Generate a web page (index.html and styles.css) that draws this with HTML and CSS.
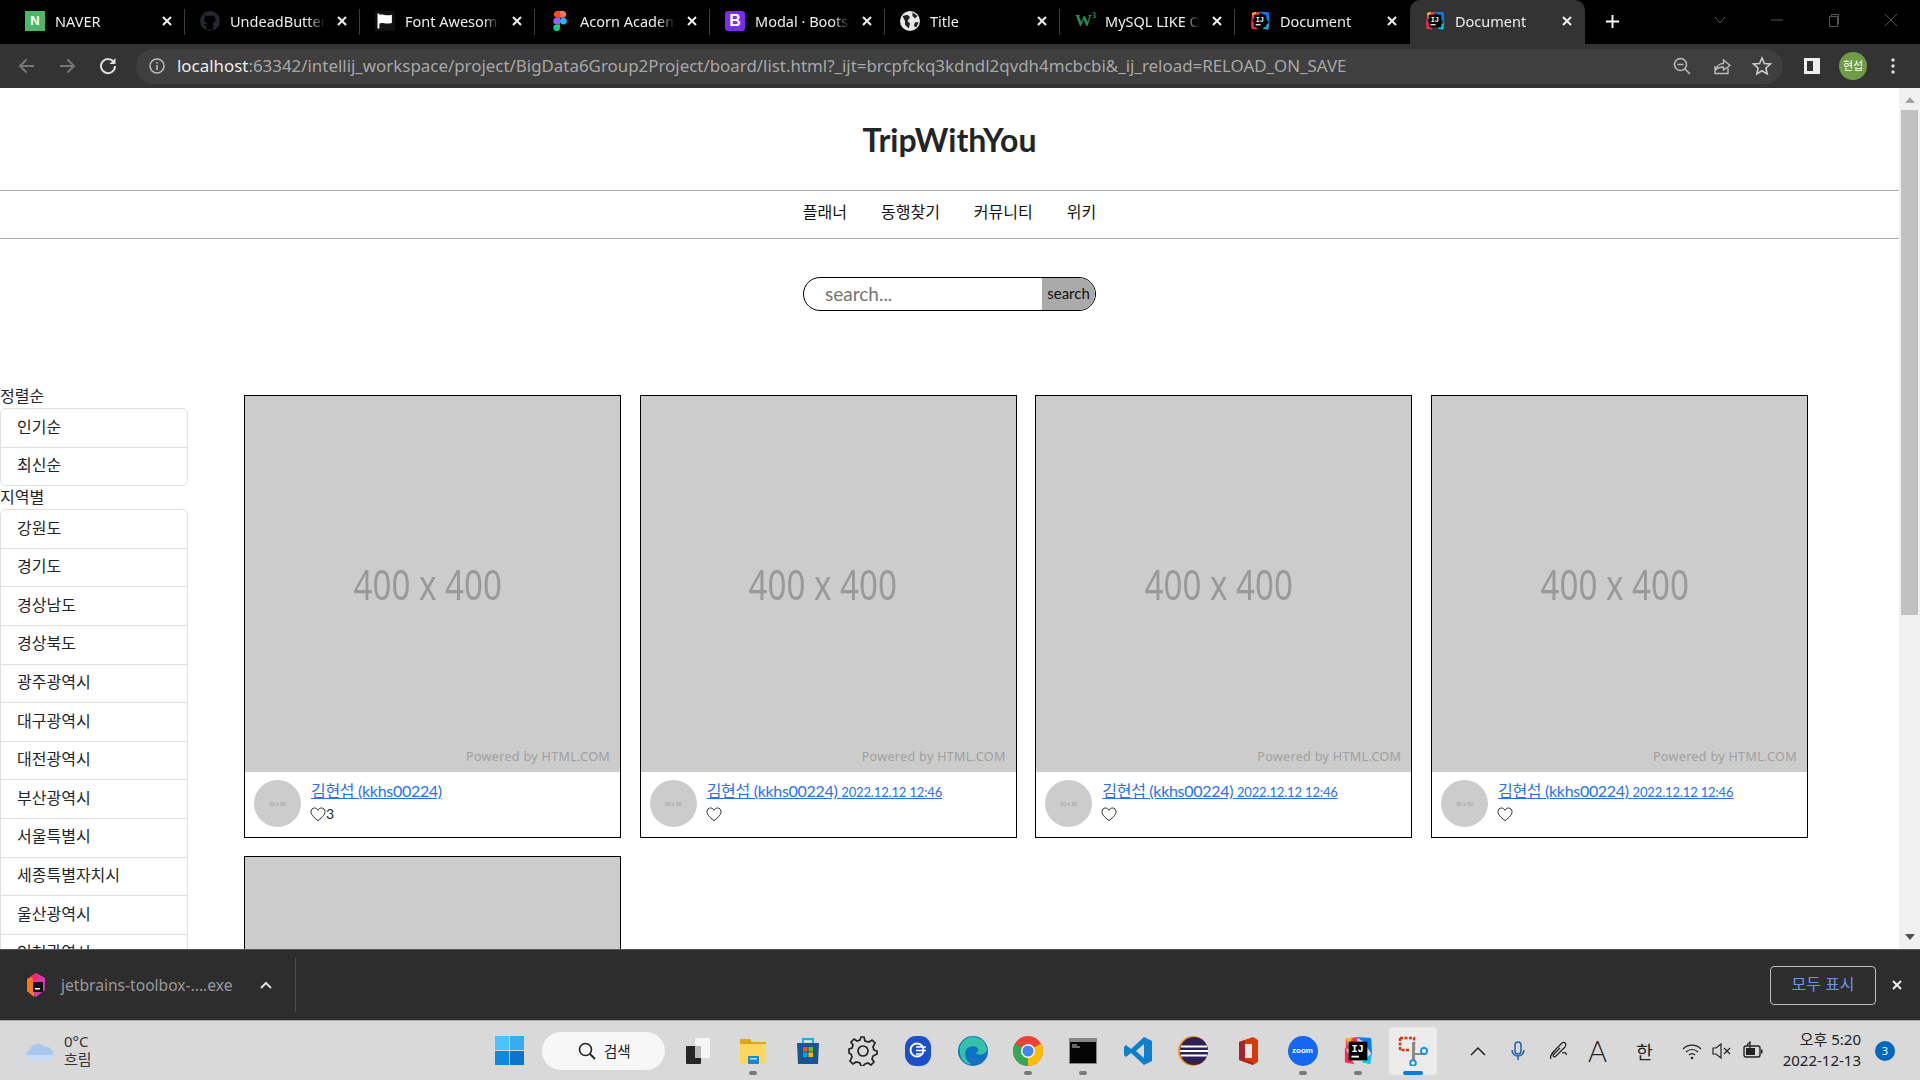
FILE: index.html
```html
<!DOCTYPE html>
<html lang="ko">
<head>
<meta charset="utf-8">
<title>Document</title>
<link rel="stylesheet" href="styles.css">
</head>
<body>
<svg class="sprite" aria-hidden="true">
  <symbol id="ij" viewBox="0 0 32 32">
    <path d="M3 3 16 1 13 12 3 14Z" fill="#fe315d"/>
    <path d="M14 1 30 2 31 20 22 6Z" fill="#087cfa"/>
    <path d="M2 12 12 30 2 28Z" fill="#fe2857"/>
    <path d="M20 28 31 18 29 30Z" fill="#07c3f2"/>
    <path d="M3 3 10 1 6 12Z" fill="#fdb60d"/>
    <rect x="6" y="6" width="20" height="20" fill="#000"/>
    <rect x="9" y="21" width="8" height="2" fill="#fff"/>
    <text x="9" y="17" class="ij-text">IJ</text>
  </symbol>
  <symbol id="x" viewBox="0 0 14 14"><path d="M3 3 11 11M11 3 3 11" fill="none" stroke="currentColor" stroke-width="2"/></symbol>
  <symbol id="heart" viewBox="0 0 16 16"><path d="M8 14.6C3 10.8 1 8.4 1 5.6 1 3.4 2.7 2 4.5 2 6 2 7.3 2.9 8 4.3 8.7 2.9 10 2 11.5 2 13.3 2 15 3.4 15 5.6 15 8.4 13 10.8 8 14.6Z" fill="none" stroke="#212529" stroke-width="1"/></symbol>
</svg>
<div class="screen">
  <div class="tabs">
    <div class="tab"><span class="favicon naver">N</span><span class="tab-title">NAVER</span><svg class="tab-close"><use href="#x"/></svg></div>
    <div class="tab"><svg class="favicon" viewBox="0 0 16 16"><circle cx="8" cy="8" r="8" fill="#24292f"/><path d="M5 15V12C3 12 3 10 2.500 10 4 10 4 11 5.500 11 5.500 10.500 5.600 10 6 9.700 4 9.400 3.500 8 3.500 6.800 3.500 6 3.800 5.400 4.200 5 4 4.400 4.100 3.700 4.300 3.300 5 3.300 5.700 3.800 6 4.100 7.300 3.700 8.700 3.700 10 4.100 10.300 3.800 11 3.300 11.700 3.300 11.900 3.700 12 4.400 11.800 5 12.200 5.400 12.500 6 12.500 6.800 12.500 8 12 9.400 10 9.700 10.400 10 10.500 10.700 10.500 11.500V15Z" fill="#000"/></svg><span class="tab-title">UndeadButterfly</span><svg class="tab-close"><use href="#x"/></svg></div>
    <div class="tab"><svg class="favicon" viewBox="0 0 16 16"><rect width="16" height="16" fill="#111"/><path d="M2 2V14H3.500V10C6 8.500 8 11 13.500 9.500V3C9 4.500 6 2 3.500 3.200V2Z" fill="#fff"/></svg><span class="tab-title">Font Awesome</span><svg class="tab-close"><use href="#x"/></svg></div>
    <div class="tab"><svg class="favicon" viewBox="0 0 16 16"><path d="M8 0H5.300A2.700 2.700 0 0 0 5.300 5.300H8Z" fill="#f24e1e"/><path d="M8 0H10.700A2.700 2.700 0 0 1 10.700 5.300H8Z" fill="#ff7262"/><path d="M8 5.300H5.300A2.700 2.700 0 0 0 5.300 10.700H8Z" fill="#a259ff"/><circle cx="10.700" cy="8" r="2.700" fill="#1abcfe"/><path d="M8 10.700H5.300A2.700 2.700 0 1 0 8 13.400Z" fill="#0acf83"/></svg><span class="tab-title">Acorn Academy</span><svg class="tab-close"><use href="#x"/></svg></div>
    <div class="tab"><span class="favicon bootstrap">B</span><span class="tab-title">Modal · Bootstrap</span><svg class="tab-close"><use href="#x"/></svg></div>
    <div class="tab"><svg class="favicon" viewBox="0 0 16 16"><circle cx="8" cy="8" r="8" fill="#e8e8e8"/><path d="M2 4 6 3 8 5 6 8 8 10 7 14 4 11 4 8ZM10 1 14 4 12 6 10 4ZM12 9 15 9 13 13 11 12Z" fill="#222"/></svg><span class="tab-title">Title</span><svg class="tab-close"><use href="#x"/></svg></div>
    <div class="tab"><span class="favicon w3">W<sup class="w3-sup">3</sup></span><span class="tab-title">MySQL LIKE Operator</span><svg class="tab-close"><use href="#x"/></svg></div>
    <div class="tab tab-plain"><svg class="favicon"><use href="#ij"/></svg><span class="tab-title">Document</span><svg class="tab-close"><use href="#x"/></svg></div>
    <div class="tab tab-active"><svg class="favicon"><use href="#ij"/></svg><span class="tab-title">Document</span><svg class="tab-close"><use href="#x"/></svg></div>
    <svg class="tab-new" viewBox="0 0 16 16"><path d="M8 1V15M1 8H15" stroke="#fff" stroke-width="2"/></svg>
    <div class="window-controls">
      <svg class="win-icon" viewBox="0 0 16 16"><path d="M3 5 8 11 13 5" fill="none" stroke="#555" stroke-width="1"/></svg>
      <svg class="win-icon" viewBox="0 0 16 16"><path d="M2 8H14" stroke="#555" stroke-width="1"/></svg>
      <svg class="win-icon" viewBox="0 0 16 16"><path d="M3.500 4.500H11.500V14.500H3.500ZM5.500 4.500V2.500H12.500V12H11.500" fill="none" stroke="#555" stroke-width="1"/></svg>
      <svg class="win-icon" viewBox="0 0 16 16"><path d="M2 2 14 14M14 2 2 14" stroke="#555" stroke-width="1"/></svg>
    </div>
  </div>

  <div class="toolbar">
    <svg class="tool tool-back" viewBox="0 0 20 20"><path d="M17 10H3.500M9.500 3.500 3 10 9.500 16.500" fill="none" stroke="#777" stroke-width="2"/></svg>
    <svg class="tool tool-fwd" viewBox="0 0 20 20"><path d="M3 10H16.500M10.500 3.500 17 10 10.500 16.500" fill="none" stroke="#777" stroke-width="2"/></svg>
    <svg class="tool tool-reload" viewBox="0 0 20 20"><path d="M16 6.500A7 7 0 1 0 17 10" fill="none" stroke="#ddd" stroke-width="2"/><path d="M17.500 2V8H11.500Z" fill="#ddd"/></svg>
    <div class="omnibox">
      <svg class="info" viewBox="0 0 16 16"><circle cx="8" cy="8" r="7" fill="none" stroke="#bbb" stroke-width="1.500"/><path d="M8 7V12M8 4V5.600" stroke="#bbb" stroke-width="1.600"/></svg>
      <span class="url"><span class="url-host">localhost</span>:63342/intellij_workspace/project/BigData6Group2Project/board/list.html?_ijt=brcpfckq3kdndl2qvdh4mcbcbi&amp;_ij_reload=RELOAD_ON_SAVE</span>
      <div class="omni-actions">
        <svg class="omni-icon" viewBox="0 0 20 20"><circle cx="8.500" cy="8.500" r="6" fill="none" stroke="#bbb" stroke-width="1.600"/><path d="M13 13 18 18M5.500 8.500H11.500" stroke="#bbb" stroke-width="1.600"/></svg>
        <svg class="omni-icon" viewBox="0 0 20 20"><path d="M3 10V17.500H16V12M3.500 14C4.500 10 8 7.500 11.500 7.500V4L18 9.500 11.500 14V11C8 11 5.500 12 3.500 14Z" fill="none" stroke="#bbb" stroke-width="1.400"/></svg>
        <svg class="omni-icon" viewBox="0 0 20 20"><path d="M10 2 12.400 7.500 18.400 8 13.900 12 15.200 17.900 10 14.800 4.800 17.900 6.100 12 1.600 8 7.600 7.500Z" fill="none" stroke="#ccc" stroke-width="1.600"/></svg>
      </div>
    </div>
    <svg class="panel-icon" viewBox="0 0 18 18"><path d="M1 1H17V17H1ZM4 4V14H10V4Z" fill="#eee" fill-rule="evenodd"/></svg>
    <span class="profile">현섭</span>
    <svg class="menu-icon" viewBox="0 0 4 18"><circle cx="2" cy="3" r="1.700" fill="#ddd"/><circle cx="2" cy="9" r="1.700" fill="#ddd"/><circle cx="2" cy="15" r="1.700" fill="#ddd"/></svg>
  </div>

  <div class="viewport">
    <main class="page">
      <header class="site-header"><h1 class="site-title">TripWithYou</h1></header>
      <nav class="site-nav">
        <a class="nav-link">플래너</a><a class="nav-link">동행찾기</a><a class="nav-link">커뮤니티</a><a class="nav-link">위키</a>
      </nav>
      <form class="search">
        <span class="search-input">search...</span>
        <span class="search-btn">search</span>
      </form>
      <div class="content">
        <aside class="sidebar">
          <div class="side-label">정렬순</div>
          <ul class="side-list">
            <li class="side-item">인기순</li>
            <li class="side-item">최신순</li>
          </ul>
          <div class="side-label">지역별</div>
          <ul class="side-list">
            <li class="side-item">강원도</li>
            <li class="side-item">경기도</li>
            <li class="side-item">경상남도</li>
            <li class="side-item">경상북도</li>
            <li class="side-item">광주광역시</li>
            <li class="side-item">대구광역시</li>
            <li class="side-item">대전광역시</li>
            <li class="side-item">부산광역시</li>
            <li class="side-item">서울특별시</li>
            <li class="side-item">세종특별자치시</li>
            <li class="side-item">울산광역시</li>
            <li class="side-item">인천광역시</li>
            <li class="side-item">전라남도</li>
          </ul>
        </aside>
        <section class="cards">
          <article class="card">
            <div class="thumb"><span class="thumb-size">400 x 400</span><span class="thumb-credit">Powered by HTML.COM</span></div>
            <div class="card-foot">
              <div class="avatar"><span class="avatar-size">50 x 50</span></div>
              <div class="card-meta">
                <a class="card-link">김현섭 (kkhs00224)</a>
                <div class="likes"><svg class="heart"><use href="#heart"/></svg>3</div>
              </div>
            </div>
          </article>
          <article class="card">
            <div class="thumb"><span class="thumb-size">400 x 400</span><span class="thumb-credit">Powered by HTML.COM</span></div>
            <div class="card-foot">
              <div class="avatar"><span class="avatar-size">50 x 50</span></div>
              <div class="card-meta">
                <a class="card-link">김현섭 (kkhs00224) <small class="card-date">2022.12.12 12:46</small></a>
                <div class="likes"><svg class="heart"><use href="#heart"/></svg></div>
              </div>
            </div>
          </article>
          <article class="card">
            <div class="thumb"><span class="thumb-size">400 x 400</span><span class="thumb-credit">Powered by HTML.COM</span></div>
            <div class="card-foot">
              <div class="avatar"><span class="avatar-size">50 x 50</span></div>
              <div class="card-meta">
                <a class="card-link">김현섭 (kkhs00224) <small class="card-date">2022.12.12 12:46</small></a>
                <div class="likes"><svg class="heart"><use href="#heart"/></svg></div>
              </div>
            </div>
          </article>
          <article class="card">
            <div class="thumb"><span class="thumb-size">400 x 400</span><span class="thumb-credit">Powered by HTML.COM</span></div>
            <div class="card-foot">
              <div class="avatar"><span class="avatar-size">50 x 50</span></div>
              <div class="card-meta">
                <a class="card-link">김현섭 (kkhs00224) <small class="card-date">2022.12.12 12:46</small></a>
                <div class="likes"><svg class="heart"><use href="#heart"/></svg></div>
              </div>
            </div>
          </article>
          <article class="card">
            <div class="thumb"><span class="thumb-size">400 x 400</span><span class="thumb-credit">Powered by HTML.COM</span></div>
          </article>
        </section>
      </div>
    </main>
    <div class="scrollbar">
      <svg class="sb-arrow" viewBox="0 0 10 6"><path d="M0 6 5 0 10 6Z" fill="#a3a3a3"/></svg>
      <div class="sb-thumb"></div>
      <svg class="sb-arrow sb-arrow-down" viewBox="0 0 10 6"><path d="M0 0 5 6 10 0Z" fill="#505050"/></svg>
    </div>
  </div>

  <div class="downloads">
    <svg class="dl-icon" viewBox="0 0 20 24"><path d="M10 0 19 5V17L10 24 1 18V6Z" fill="#d23bb0"/><path d="M1 6 8 3 8 24 1 18Z" fill="#f97a12"/><path d="M5 3 10 0 12 4 8 9Z" fill="#fe2857"/><rect x="7" y="9" width="10" height="10" fill="#111"/><rect x="9" y="15" width="5" height="1.500" fill="#fff"/></svg>
    <span class="dl-name">jetbrains-toolbox-....exe</span>
    <svg class="dl-caret" viewBox="0 0 12 8"><path d="M1 7 6 2 11 7" fill="none" stroke="#ddd" stroke-width="2"/></svg>
    <span class="dl-sep"></span>
    <span class="dl-all">모두 표시</span>
    <svg class="dl-close"><use href="#x"/></svg>
  </div>

  <footer class="taskbar">
    <div class="weather">
      <svg class="weather-icon" viewBox="0 0 30 22"><path d="M7 21A6 6 0 0 1 6 9.500 8 8 0 0 1 20 7 6.500 6.500 0 0 1 24 21Z" fill="#a9c8f0"/><path d="M2 15A6 6 0 0 0 7 21H24A6 6 0 0 0 29 15Z" fill="#c9dcf6"/></svg>
      <div class="weather-text"><span>0°C</span><span>흐림</span></div>
    </div>
    <div class="task-apps">
      <div class="task-app task-win"><svg class="ti ti-win" viewBox="0 0 30 30"><rect width="14.500" height="14.500" fill="#4cc2ff"/><rect x="15.500" width="14.500" height="14.500" fill="#35adf0"/><rect y="15.500" width="14.500" height="14.500" fill="#0f88e0"/><rect x="15.500" y="15.500" width="14.500" height="14.500" fill="#0a74cf"/></svg></div>
      <div class="task-search"><svg class="search-glass" viewBox="0 0 18 18"><circle cx="7.500" cy="7.500" r="6" fill="none" stroke="#222" stroke-width="1.600"/><path d="M12 12 17 17" stroke="#222" stroke-width="1.800"/></svg><span>검색</span></div>
      <div class="task-app"><svg class="ti" viewBox="0 0 30 30"><rect x="12" y="2" width="15" height="20" rx="1" fill="#f5f5f5"/><rect x="3" y="10" width="15" height="18" rx="1" fill="#262626"/><rect x="12" y="10" width="6" height="12" fill="#b9b9b9"/></svg></div>
      <div class="task-app task-open"><svg class="ti" viewBox="0 0 30 30"><path d="M2 3H12L14 6H28V27H2Z" fill="#e0a512"/><rect x="2" y="8" width="26" height="20" fill="#fcd75b"/><rect x="10" y="20" width="11" height="8" rx="1" fill="#1a86d0"/><rect x="12" y="22" width="7" height="1.500" fill="#bfe3fb"/></svg></div>
      <div class="task-app"><svg class="ti" viewBox="0 0 30 30"><path d="M10 7V3H20V7" fill="none" stroke="#29a8e8" stroke-width="2"/><path d="M4 7H26L25 28H5Z" fill="#17568f"/><rect x="10" y="11" width="4.500" height="4.500" fill="#f25022"/><rect x="15.500" y="11" width="4.500" height="4.500" fill="#7fba00"/><rect x="10" y="16.500" width="4.500" height="4.500" fill="#00a4ef"/><rect x="15.500" y="16.500" width="4.500" height="4.500" fill="#ffb900"/></svg></div>
      <div class="task-app"><svg class="ti" viewBox="0 0 30 30"><path d="M13 1 16 1 17 5 21 6 24 4 27 7 25 11 26 14 29 15V18L25 20 24 23 26 26 23 29 20 27 17 28 15 30H13L12 27 8 26 5 28 2 25 4 21 3 18 1 17V13L4 12 5 9 3 6 6 3 9 5 12 4Z" fill="none" stroke="#222" stroke-width="1.700"/><circle cx="15" cy="15" r="5" fill="none" stroke="#222" stroke-width="1.700"/></svg></div>
      <div class="task-app"><svg class="ti" viewBox="0 0 30 30"><rect x="2" width="26" height="30" rx="11" fill="#1c50c8"/><circle cx="14" cy="14" r="6.500" fill="none" stroke="#fff" stroke-width="2"/><path d="M13 11H23M13 14.500H23M13 18H20" stroke="#fff" stroke-width="1.500"/></svg></div>
      <div class="task-app"><svg class="ti" viewBox="0 0 30 30"><circle cx="15" cy="15" r="15" fill="#0c72c6"/><path d="M2 10A14 14 0 0 1 29 13C29 19 20 20 18 17 24 14 18 8 11 11 5 14 6 25 14 28 7 30 0 22 2 10Z" fill="#35c1a8"/><path d="M14 28C22 30 27 25 28 21 24 24 19 24 15 22 11 20 11 15 13 13 8 15 8 26 14 28Z" fill="#1b6fc2"/></svg></div>
      <div class="task-app task-open"><svg class="ti" viewBox="0 0 30 30"><circle cx="15" cy="15" r="15" fill="#ea4335"/><path d="M15 15 28 7.500A15 15 0 0 1 15 30Z" fill="#fbbc05"/><path d="M15 15 15 30A15 15 0 0 1 2 7.500Z" fill="#34a853"/><circle cx="15" cy="15" r="7" fill="#fff"/><circle cx="15" cy="15" r="5.500" fill="#4285f4"/></svg></div>
      <div class="task-app task-open"><svg class="ti" viewBox="0 0 30 30"><rect x="1" y="2" width="28" height="26" fill="#888"/><rect x="2" y="6" width="26" height="21" fill="#050505"/><path d="M4 9H9M4 11H12" stroke="#ccc" stroke-width="1"/></svg></div>
      <div class="task-app"><svg class="ti" viewBox="0 0 30 30"><path d="M21 1 29 5V25L21 29 8 17 3 21 1 19V11L3 9 8 13ZM21 8 13 15 21 22Z" fill="#0f7fcc" fill-rule="evenodd"/></svg></div>
      <div class="task-app"><svg class="ti" viewBox="0 0 30 30"><circle cx="15" cy="15" r="15" fill="#f7941e"/><circle cx="16" cy="15" r="14" fill="#2c2255"/><path d="M3 10.500H29M2 15H30M3 19.500H29" stroke="#fff" stroke-width="2"/></svg></div>
      <div class="task-app"><svg class="ti" viewBox="0 0 30 30"><path d="M6 6 20 1 25 4V26L20 29 6 24Z" fill="#d83b01"/><path d="M6 6 12 4V24L20 26 20 29 6 24Z" fill="#a4262c"/><rect x="12" y="8" width="7" height="14" fill="#e8e8e8"/></svg></div>
      <div class="task-app task-open"><div class="ti-zoom">zoom</div></div>
      <div class="task-app task-open"><svg class="ti"><use href="#ij"/></svg></div>
      <div class="task-app task-active"><svg class="ti" viewBox="0 0 30 30"><path d="M2 2H16V14" fill="none" stroke="#d9350f" stroke-width="2.500" stroke-dasharray="3 1.500"/><path d="M2 2V14H12" fill="none" stroke="#d9350f" stroke-width="2.500" stroke-dasharray="3 1.500"/><path d="M14 6 17 7 17 24 14 24Z" fill="#8a8a8a"/><path d="M14 18H28" stroke="#8a8a8a" stroke-width="2"/><circle cx="26" cy="15" r="3" fill="#fff" stroke="#1f8fe0" stroke-width="2"/><circle cx="15" cy="27" r="2.800" fill="#fff" stroke="#1f8fe0" stroke-width="2"/></svg></div>
    </div>
    <div class="tray">
      <svg class="tray-icon" viewBox="0 0 20 20"><path d="M3 14 10 7 17 14" fill="none" stroke="#222" stroke-width="1.500"/></svg>
      <svg class="tray-icon" viewBox="0 0 20 20"><rect x="7" y="1" width="6" height="12" rx="3" fill="none" stroke="#1f5fb0" stroke-width="1.500"/><path d="M4 9A6 6 0 0 0 16 9M10 15V19" fill="none" stroke="#1f5fb0" stroke-width="1.500"/></svg>
      <svg class="tray-icon" viewBox="0 0 20 20"><path d="M3 18C1 15 5 11 9 7L14 2C17 0 19 3 17 6L8 15C6 17 4 15 6 13L12 7M14 12C17 11 19 12 18 14" fill="none" stroke="#222" stroke-width="1.200"/></svg>
      <span class="tray-a">A</span>
      <span class="tray-han">한</span>
      <svg class="tray-icon tray-wifi" viewBox="0 0 20 20"><path d="M1 8A12.500 12.500 0 0 1 19 8M4 11A8.500 8.500 0 0 1 16 11M7 14A4 4 0 0 1 13 14" fill="none" stroke="#222" stroke-width="1.200"/><circle cx="10" cy="17" r="1.300" fill="#222"/></svg>
      <svg class="tray-icon tray-vol" viewBox="0 0 20 20"><path d="M2 7H5L10 3V17L5 13H2ZM13 7 19 13M19 7 13 13" fill="none" stroke="#222" stroke-width="1.200"/></svg>
      <svg class="tray-icon tray-bat" viewBox="0 0 20 20"><rect x="1" y="5" width="16" height="11" rx="2" fill="none" stroke="#222" stroke-width="1.400"/><rect x="3" y="7" width="9" height="7" fill="#222"/><rect x="18" y="8.500" width="1.500" height="4" fill="#222"/><path d="M7 7V1L4 4" fill="none" stroke="#222" stroke-width="1.200"/></svg>
      <div class="clock"><span>오후 5:20</span><span>2022-12-13</span></div>
      <span class="badge">3</span>
    </div>
  </footer>
</div>
</body>
</html>
```
FILE: styles.css
```css
* { box-sizing: border-box; }
html, body { margin: 0; height: 100%; overflow: hidden; }
body { font-family: "Noto Sans", "Noto Sans CJK KR", sans-serif; font-size: 16px; color: #212529; }
.sprite { display: none; }
.ij-text { font: 700 11px "Liberation Mono", monospace; fill: #fff; }
.screen { display: flex; flex-direction: column; height: 1080px; }

/* tabs */
.tabs { height: 44px; flex: none; background: #000; display: flex; align-items: stretch; padding-left: 10px; color: #eee; font-size: 14.5px; }
.tab { position: relative; width: 175px; flex: none; display: flex; align-items: center; padding: 0 11.5px 2px 15px; }
.tab::after { content: ""; position: absolute; right: 0; top: 9px; height: 26px; width: 1px; background: #3c3c3c; }
.tab-plain::after, .tab-active::after { display: none; }
.tab-active { background: #333; border-radius: 10px 10px 0 0; }
.favicon { width: 20px; height: 20px; flex: none; display: block; }
.naver { background: #4ab866; color: #fff; font: 700 13px/20px "Liberation Sans", sans-serif; text-align: center; }
.bootstrap { background: #7a2cf0; color: #fff; border-radius: 3px; font: 700 16px/20px "Liberation Sans", sans-serif; text-align: center; }
.w3 { color: #2e8b57; font: 700 17px/20px "Liberation Serif", serif; white-space: nowrap; }
.w3-sup { font-size: 8px; vertical-align: top; line-height: 9px; }
.tab-title { flex: 1; min-width: 0; margin: 0 10px; white-space: nowrap; overflow: hidden; -webkit-mask-image: linear-gradient(to right, #000 82%, transparent 100%); mask-image: linear-gradient(to right, #000 82%, transparent 100%); }
.tab-close { width: 14px; height: 14px; flex: none; color: #f0f0f0; }
.tab-new { width: 15px; height: 15px; align-self: center; margin: 0 0 2px 20px; flex: none; }
.window-controls { flex: 1; display: flex; align-items: center; justify-content: flex-end; gap: 41px; padding: 0 21px 4px 0; }
.win-icon { width: 16px; height: 16px; display: block; }

/* toolbar */
.toolbar { height: 44px; flex: none; background: #333; display: flex; align-items: center; position: relative; }
.tool { width: 20px; height: 20px; flex: none; }
.tool-back { margin-left: 17px; }
.tool-fwd { margin-left: 20px; }
.tool-reload { margin-left: 21px; }
.omnibox { width: 1647px; height: 35px; margin-left: 18px; border-radius: 18px; background: #3f3f3f; display: flex; align-items: center; padding: 0 11px 0 13px; color: #a8a8a8; }
.info { width: 16px; height: 16px; flex: none; }
.url { margin-left: 12px; font-size: 16.9px; line-height: 22px; white-space: nowrap; flex: 1; min-width: 0; overflow: hidden; }
.url-host { color: #eee; }
.omni-actions { display: flex; gap: 20px; flex: none; }
.omni-icon { width: 20px; height: 20px; display: block; }
.panel-icon { width: 18px; height: 18px; margin-left: 20px; flex: none; }
.profile { width: 28px; height: 28px; border-radius: 50%; background: #6e9c45; color: #fff; margin-left: 18px; font-size: 11px; line-height: 28px; text-align: center; flex: none; }
.menu-icon { width: 4px; height: 18px; margin-left: 24px; flex: none; }

/* page */
.viewport { flex: 1; min-height: 0; display: flex; }
.page { flex: 1; min-width: 0; overflow: hidden; background: #fff; font-family: Lato, "Noto Sans CJK KR", sans-serif; }
.site-header { height: 102px; display: flex; align-items: center; justify-content: center; padding-top: 2px; }
.site-title { margin: 0; font-size: 32px; font-weight: 700; line-height: 38px; color: #212529; }
.site-nav { height: 49px; border-top: 1px solid #aaa; border-bottom: 1px solid #aaa; display: flex; align-items: center; justify-content: center; gap: 34px; padding-bottom: 6px; }
.nav-link { color: #111; line-height: 24px; }
.search { width: 293px; height: 34px; margin: 38px auto 0; border: 1px solid #000; border-radius: 17px; display: flex; overflow: hidden; }
.search-input { flex: 1; padding-left: 21px; font-size: 19px; line-height: 32px; color: #757575; }
.search-btn { width: 53px; background: #aaa; color: #111; font-size: 15px; line-height: 30px; text-align: center; }
.content { display: flex; align-items: flex-start; margin-top: 74px; }
.sidebar { width: 188px; flex: none; }
.side-label { line-height: 22px; height: 23px; }
.side-list { list-style: none; margin: 0; padding: 0; }
.side-item { height: 39.6px; margin-top: -1px; padding: 6.5px 16px 9.5px; line-height: 22.6px; border: 1px solid #dfdfdf; background: #fff; }
.side-item:first-child { margin-top: 0; border-radius: 6px 6px 0 0; }
.side-item:last-child { border-radius: 0 0 6px 6px; }
.cards { display: grid; grid-template-columns: repeat(4, 395.67px); row-gap: 18px; margin: 10px 0 0 56px; align-items: start; }
.card { width: 377px; border: 1px solid #000; }
.thumb { position: relative; height: 376px; background: #ccc; color: #999; overflow: hidden; display: flex; justify-content: center; padding-top: 158px; font-family: "Noto Sans", sans-serif; }
.thumb-size { font-size: 41.4px; line-height: 60px; height: 60px; transform: scaleX(.8); white-space: nowrap; margin-left: -10px; }
.thumb-credit { position: absolute; right: 10px; bottom: 6px; font-size: 12.6px; line-height: 18px; letter-spacing: .3px; color: #a0a0a0; }
.card-foot { height: 65px; display: flex; padding: 8px 0 0 9px; }
.avatar { width: 47px; height: 47px; border-radius: 50%; background: #ccc; color: #999; display: flex; align-items: center; justify-content: center; flex: none; }
.avatar-size { font-size: 5px; }
.card-meta { margin-left: 10px; display: flex; flex-direction: column; }
.card-link { color: #2b6ff0; text-decoration: underline; line-height: 22px; letter-spacing: -.3px; white-space: nowrap; height: 23px; display: block; }
.card-date { font-size: 13px; letter-spacing: -.15px; }
.likes { display: flex; align-items: center; height: 22px; color: #212529; font-size: 14px; line-height: 22px; }
.heart { width: 16px; height: 16px; display: block; margin-left: -1px; }

/* scrollbar */
.scrollbar { width: 21px; flex: none; background: #f1f1f1; display: flex; flex-direction: column; align-items: center; padding: 9px 0; position: relative; }
.sb-arrow { width: 10px; height: 6px; flex: none; }
.sb-thumb { width: 17px; height: 505px; margin-top: 7px; background: #c1c1c1; }
.sb-arrow-down { margin-top: auto; }

/* downloads */
.downloads { height: 71px; flex: none; background: #2d2d2d; border-top: 1px solid #555; display: flex; align-items: center; padding-left: 26px; color: #9a9a9a; position: relative; }
.dl-icon { width: 20px; height: 24px; flex: none; }
.dl-name { margin-left: 15px; width: 199px; font-size: 15.6px; line-height: 22px; white-space: nowrap; }
.dl-caret { width: 12px; height: 8px; flex: none; }
.dl-sep { width: 1px; height: 54px; background: #4c4c4c; margin-left: 23px; }
.dl-all { width: 106px; height: 39px; margin-left: auto; border: 1px solid #bdbdbd; border-radius: 4px; color: #6d93e6; font-size: 16px; line-height: 34px; text-align: center; }
.dl-close { width: 14px; height: 14px; margin: 0 16px 0 14px; color: #f0f0f0; flex: none; }

/* taskbar */
.taskbar { height: 60px; flex: none; background: #d9d9d9; border-top: 1px solid #a9a9a9; display: flex; align-items: center; color: #222; position: relative; }
.weather { width: 495px; flex: none; display: flex; align-items: center; padding: 0 0 2px 24px; }
.weather-icon { width: 30px; height: 22px; flex: none; margin-top: 2px; }
.weather-text { display: flex; flex-direction: column; margin-left: 10px; font-size: 15px; line-height: 18px; color: #333; }
.task-apps { display: flex; align-items: center; height: 100%; }
.task-app { position: relative; width: 55px; height: 48px; display: flex; align-items: center; justify-content: center; flex: none; }
.task-win { width: 29px; margin-right: 18px; }
.task-open::after { content: ""; position: absolute; bottom: 0; left: 50%; margin-left: -4px; width: 8px; height: 4px; border-radius: 2px; background: #7a7a7a; }
.task-active { background: #ececec; border-radius: 4px; width: 48px; margin-left: 4px; }
.task-active::after { content: ""; position: absolute; bottom: 0; left: 50%; margin-left: -10px; width: 20px; height: 4px; border-radius: 2px; background: #0c7bd9; }
.ti { width: 30px; height: 30px; display: block; }
.ti-win { width: 29px; height: 29px; }
.ti-zoom { width: 30px; height: 30px; border-radius: 50%; background: #1566f0; color: #fff; font: 700 8px/30px "Liberation Sans", sans-serif; text-align: center; }
.task-search { width: 123px; height: 38px; flex: none; border-radius: 19px; background: #f7f7f7; display: flex; align-items: center; padding-left: 36px; gap: 8px; font-size: 14.5px; line-height: 20px; margin-right: 5px; }
.search-glass { width: 18px; height: 18px; flex: none; }
.tray { flex: 1; display: flex; align-items: center; margin-left: 30.5px; }
.tray-icon { width: 20px; height: 20px; flex: none; margin-right: 20px; display: block; }
.tray-a { width: 20px; margin-right: 27px; font: 300 29px/30px Lato, "Liberation Sans", sans-serif; text-align: center; color: #222; }
.tray-han { width: 20px; margin-right: 27px; font-size: 18px; text-align: center; }
.tray-wifi { margin-right: 9px; }
.tray-vol { margin-right: 12px; }
.tray-bat { margin-right: 0; }
.clock { margin-left: auto; display: flex; flex-direction: column; align-items: flex-end; font-size: 15px; line-height: 21px; padding-bottom: 1px; }
.badge { width: 20px; height: 20px; margin: 0 25px 0 14px; border-radius: 50%; background: #0067c0; color: #fff; font-size: 11px; line-height: 20px; text-align: center; flex: none; }
```
